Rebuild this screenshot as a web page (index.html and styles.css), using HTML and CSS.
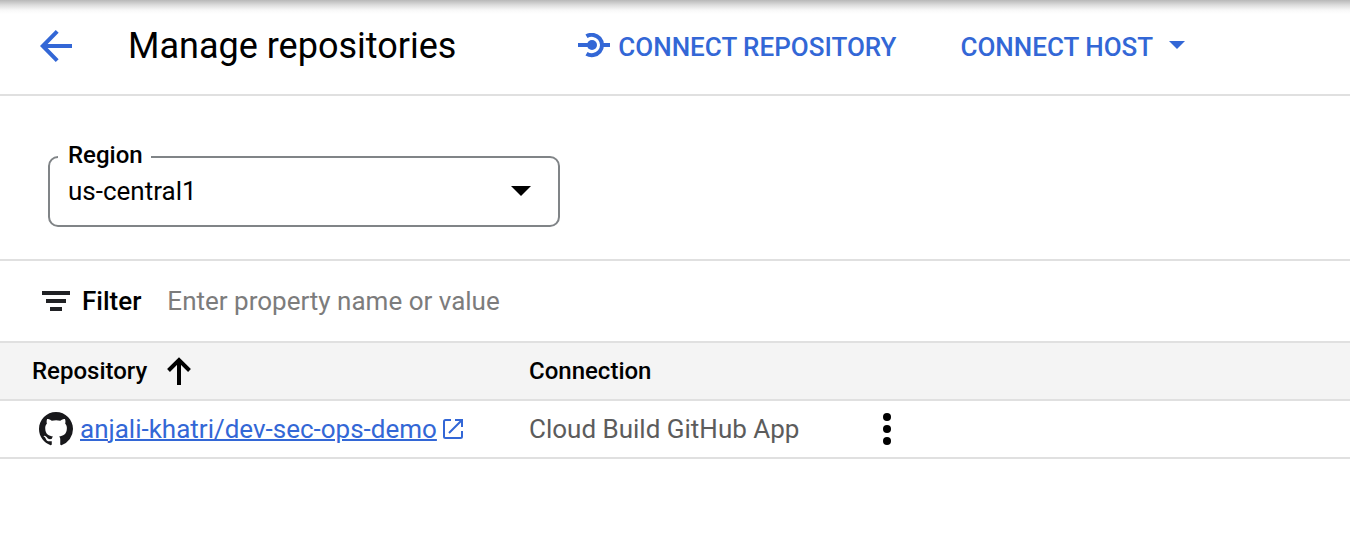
FILE: index.html
```html
<!DOCTYPE html>
<html lang="en">
<head>
<meta charset="utf-8">
<meta name="viewport" content="width=device-width, initial-scale=1">
<title>Manage repositories</title>
<link rel="stylesheet" href="styles.css">
</head>
<body>
<header class="toolbar">
  <button class="back" type="button" aria-label="Back">
    <svg width="32" height="32" viewBox="0 0 32 32" fill="none" stroke="currentColor" stroke-width="4"><path d="M32 16H3M17.200 1.400 2.800 16l14.400 14.600"/></svg>
  </button>
  <h1 class="title">Manage repositories</h1>
  <div class="actions">
    <button class="action" type="button">
      <svg width="32" height="28" viewBox="0 0 32 28"><circle cx="14" cy="12" r="5" fill="currentColor"/><path d="M0 12h12M24 12h8M8.500 3.300A10.200 10.200 0 1 1 8.500 20.700" fill="none" stroke="currentColor" stroke-width="4"/></svg>
      <span>CONNECT REPOSITORY</span>
    </button>
    <button class="action action-menu" type="button">
      <span>CONNECT HOST</span>
      <svg width="16" height="12" viewBox="0 0 16 12"><path d="M0 0h16L8 8z" fill="currentColor"/></svg>
    </button>
  </div>
</header>
<main>
  <section class="region">
    <div class="field">
      <label class="field-label" for="region">Region</label>
      <select class="field-select" id="region"><option>us-central1</option></select>
      <svg class="field-arrow" width="20" height="10" viewBox="0 0 20 10"><path d="M0 0h20L10 10z"/></svg>
    </div>
  </section>
  <div class="filter">
    <svg width="28" height="20" viewBox="0 0 28 20" fill="#202124"><path d="M0 0h28v4H0zM4 8h20v4H4zM8 16h12v4H8z"/></svg>
    <label class="filter-label" for="filter">Filter</label>
    <input class="filter-input" id="filter" type="text" placeholder="Enter property name or value">
  </div>
  <table class="repos">
    <colgroup><col class="col-repo"><col class="col-connection"><col></colgroup>
    <thead>
      <tr>
        <th class="first" scope="col"><button class="sort" type="button">Repository
          <svg width="24" height="28" viewBox="0 0 24 28" fill="none" stroke="currentColor" stroke-width="4"><path d="M12 28V3M1.500 13.500 12 3l10.500 10.500"/></svg></button></th>
        <th scope="col">Connection</th>
        <th></th>
      </tr>
    </thead>
    <tbody>
      <tr>
        <td class="first">
          <div class="repo">
            <svg width="34" height="34" viewBox="0 0 16 16" fill="#18181b"><path fill-rule="evenodd" d="M8 0C3.580 0 0 3.580 0 8c0 3.540 2.290 6.530 5.470 7.590.4.070.55-.17.55-.38 0-.19-.01-.82-.01-1.490-2.010.37-2.530-.49-2.690-.94-.09-.23-.48-.94-.82-1.130-.28-.15-.68-.52-.01-.53.63-.01 1.080.58 1.230.82.72 1.210 1.870.87 2.330.66.07-.52.28-.87.51-1.070-1.780-.2-3.640-.89-3.640-3.950 0-.87.31-1.590.82-2.150-.08-.2-.36-1.020.08-2.120 0 0 .67-.21 2.200.82.64-.18 1.320-.27 2-.27s1.360.09 2 .27c1.530-1.040 2.200-.82 2.200-.82.44 1.100.16 1.920.08 2.120.51.56.82 1.270.82 2.150 0 3.070-1.870 3.750-3.650 3.950.29.25.54.73.54 1.480 0 1.070-.01 1.930-.01 2.200 0 .21.15.46.55.38A8.010 8.010 0 0 0 16 8c0-4.420-3.580-8-8-8z"/></svg>
            <a class="repo-link" href="#"><span class="repo-name">anjali-khatri/dev-sec-ops-demo</span><svg width="20" height="20" viewBox="0 0 20 20" fill="none" stroke="currentColor" stroke-width="2"><path d="M8 1H2.500Q1 1 1 2.500v15Q1 19 2.500 19h15q1.500 0 1.500-1.500V12M12 1h7v7M19 1 6 14"/></svg></a>
          </div>
        </td>
        <td>Cloud Build GitHub App</td>
        <td>
          <button class="more" type="button" aria-label="More actions">
            <svg width="8" height="32" viewBox="0 0 8 32"><circle cx="4" cy="4" r="4"/><circle cx="4" cy="16" r="4"/><circle cx="4" cy="28" r="4"/></svg>
          </button>
        </td>
      </tr>
    </tbody>
  </table>
</main>
</body>
</html>
```
FILE: styles.css
```css
* {
  box-sizing: border-box;
}

body {
  margin: 0;
  background: #fff;
  color: #000;
  font-family: Roboto, "Liberation Sans", sans-serif;
  font-size: 26px;
  line-height: 32px;
}

svg {
  display: block;
  flex: none;
}

button,
input,
select {
  padding: 0;
  border: 0;
  background: none;
  color: inherit;
  font: inherit;
}

button {
  cursor: pointer;
}

.toolbar {
  display: flex;
  align-items: center;
  padding: 24px 40px 26px;
  border-bottom: 2px solid #e0e0e0;
  background: linear-gradient(#b8b8b8, #dcdcdc 5px, #f8f8f8 10px, #fff 14px);
}

.back {
  color: #3367d6;
}

.title {
  margin: 0 0 0 56px;
  font-size: 36px;
  font-weight: 400;
  line-height: 44px;
}

.actions {
  display: flex;
  gap: 64px;
  margin-left: 122px;
  padding-top: 2px;
}

.action {
  display: flex;
  align-items: center;
  gap: 8px;
  color: #3367d6;
  font-weight: 500;
}

.action-menu {
  gap: 16px;
}

.region {
  padding: 60px 48px 32px;
  border-bottom: 2px solid #e0e0e0;
}

.field {
  position: relative;
  max-width: 512px;
}

.field-label {
  position: absolute;
  top: -16px;
  left: 10px;
  padding: 0 8px 0 10px;
  background: #fff;
  font-size: 24px;
  font-weight: 500;
  line-height: 30px;
}

.field-select {
  display: block;
  width: 100%;
  padding: 17px 48px 18px 18px;
  border: 2px solid #808487;
  border-radius: 10px;
  appearance: none;
}

.field-arrow {
  position: absolute;
  top: 30px;
  right: 29px;
  pointer-events: none;
}

.filter {
  display: flex;
  align-items: center;
  padding: 24px 42px;
  border-bottom: 2px solid #e0e0e0;
}

.filter-label {
  margin: 0 26px 0 12px;
  font-weight: 500;
}

.filter-input {
  flex: 1;
  min-width: 0;
  height: 32px;
}

.filter-input::placeholder {
  color: #7c7c7c;
  opacity: 1;
}

.repos {
  width: 100%;
  border-collapse: separate;
  border-spacing: 0;
  table-layout: fixed;
}

.col-repo {
  width: 529px;
}

.col-connection {
  width: 354px;
}

.repos th,
.repos td {
  height: 58px;
  padding: 0;
  border-bottom: 2px solid #e0e0e0;
  text-align: left;
}

.repos th {
  background: #f4f4f4;
  font-size: 24px;
  font-weight: 500;
}

.repos td {
  color: #5c5c5c;
}

.repos .first {
  padding-left: 32px;
}

.sort {
  display: flex;
  align-items: center;
  gap: 20px;
}

.repo {
  display: flex;
  align-items: center;
  gap: 7px;
  padding-left: 7px;
}

.repo-link {
  display: flex;
  align-items: center;
  gap: 6px;
  color: #3367d6;
  text-decoration: none;
}

.repo-name {
  text-decoration: underline;
  text-decoration-thickness: 2px;
}

.more {
  display: block;
  color: #000;
}
```
